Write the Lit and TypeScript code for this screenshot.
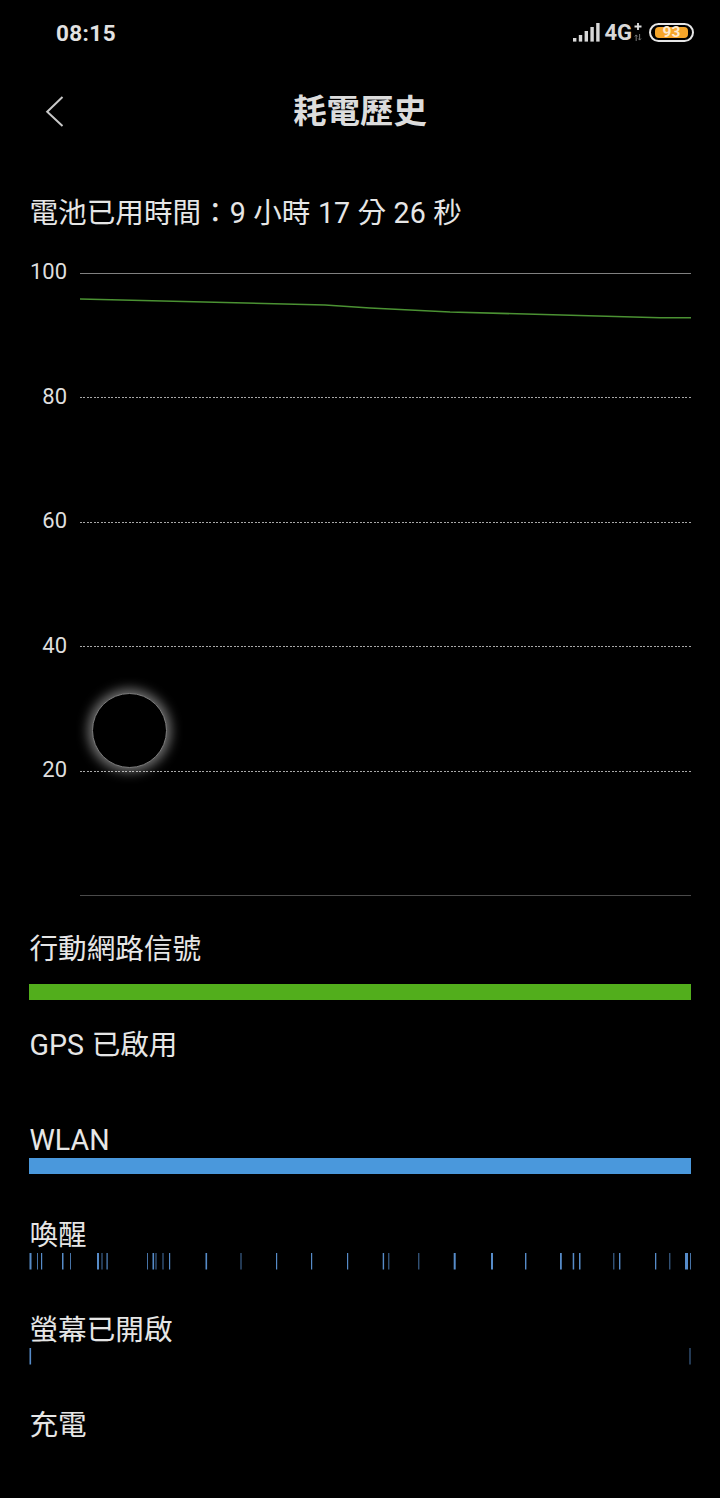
import { LitElement, html, css, svg } from 'lit';
import { customElement } from 'lit/decorators.js';

const TICKS_WAKE: [number, number][] = [
  [0.5, 2], [8, 1], [12, 1.2], [33, 1.5], [41, 1], [68, 2], [72.5, 1], [77.5, 1.2],
  [118, 1], [123.5, 1.6], [126.5, 1], [133.5, 1], [140, 1.2], [176.5, 1.6], [211.5, 1],
  [247, 1.2], [282, 1.2], [318, 1.2], [353.7, 1.4], [359.3, 1], [389.3, 1], [424.7, 2],
  [462, 2], [496, 1.4], [531, 1.8], [543.7, 1.5], [550, 1.5], [584.3, 1], [590, 1.4],
  [626, 1.3], [640.3, 1], [656, 3], [661, 1],
];
const TICKS_SCREEN: [number, number][] = [[0.5, 1.6], [660.5, 1]];

const LEVELS = ['100', '80', '60', '40', '20', ''];

@customElement('app-root')
export class AppRoot extends LitElement {
  static styles = css`
    :host {
      display: block;
      width: 720px;
      height: 1498px;
      background: #000;
      color: #e6e6e6;
      font-family: Roboto, 'Noto Sans CJK TC', sans-serif;
      overflow: hidden;
    }

    .status {
      height: 64px;
      display: flex;
      align-items: center;
      justify-content: space-between;
      padding: 2px 26px 0 56px;
      box-sizing: border-box;
    }

    .time {
      font-size: 22.5px;
      font-weight: 700;
      color: #e2e2e2;
      letter-spacing: 0.4px;
    }

    .indicators {
      display: flex;
      align-items: center;
      margin-top: -2px;
    }

    .net {
      font-size: 22px;
      font-weight: 700;
      color: #d8d8d8;
      margin-left: 4px;
    }

    .net-extra {
      margin: 0 7px 0 2px;
      display: block;
    }

    .battery {
      width: 45px;
      height: 19px;
      box-sizing: border-box;
      border: 2px solid #e6e6e6;
      border-radius: 9.5px;
      padding: 2px 4px;
      display: flex;
    }

    .battery span {
      flex: 1;
      background: #f5a52a;
      border-radius: 4px;
      font-size: 15.5px;
      font-weight: 700;
      line-height: 11px;
      text-align: center;
      color: #fbeacf;
    }

    .nav {
      height: 96px;
      position: relative;
      display: flex;
      align-items: center;
      justify-content: center;
    }

    .back {
      position: absolute;
      left: 44px;
      top: 30px;
    }

    .title {
      font-size: 33.4px;
      font-weight: 700;
      color: #dcdcdc;
      line-height: 40px;
      margin-top: -1px;
    }

    .summary {
      height: 40px;
      line-height: 42px;
      margin: 32px 0 29px 29.5px;
      font-size: 28.6px;
      word-spacing: 0.4px;
      white-space: nowrap;
    }

    .chart {
      position: relative;
      height: 646.5px;
      display: flex;
      flex-direction: column;
      justify-content: space-between;
      margin-bottom: 22.5px;
    }

    .level {
      height: 24px;
      display: flex;
      align-items: center;
    }

    .level b {
      width: 67px;
      text-align: right;
      font-weight: 400;
      font-size: 22px;
      line-height: 22px;
      color: #dedede;
      margin-top: -2px;
    }

    .rule {
      flex: none;
      width: 611px;
      height: 1px;
      margin-left: 13px;
      background: repeating-linear-gradient(90deg, #a8a8a8 0 2px, transparent 2px 3.5px);
    }

    .rule.top {
      background: #808080;
    }

    .rule.bottom {
      background: #4a4a4a;
    }

    .curve {
      position: absolute;
      left: 80px;
      top: 0;
    }

    .touch {
      position: absolute;
      left: 92px;
      top: 432px;
      width: 75px;
      height: 75px;
      box-sizing: border-box;
      border-radius: 50%;
      background: #000;
      border: 1.5px solid #7c7c7c;
      box-shadow: 0 0 12px 4px rgba(255, 255, 255, 0.45);
    }

    .row {
      height: 95px;
    }

    .row .label {
      height: 38px;
      line-height: 40px;
      padding-left: 29.5px;
      font-size: 28.6px;
      word-spacing: 0.6px;
      white-space: nowrap;
    }

    .row.first .label {
      line-height: 38px;
    }

    .track {
      display: block;
      margin-left: 29px;
      width: 662px;
      height: 16.5px;
    }

    .bar {
      height: 16px;
      margin-left: 29px;
      width: 662px;
    }

    .bar.cell {
      background: #52ae1c;
      margin-top: 16px;
    }

    .bar.wlan {
      background: #4a98dc;
    }
  `;

  private ticks(items: [number, number][]) {
    return html`<svg class="track" viewBox="0 0 662 16.5">
      ${items.map(
        ([x, w]) => svg`<rect x=${x} y="0" width=${w} height="16.5" fill="#5f9ade" opacity=${w < 1.2 ? 0.75 : 0.9}></rect>`
      )}
    </svg>`;
  }

  render() {
    return html`
      <div class="status">
        <span class="time">08:15</span>
        <div class="indicators">
          <svg width="27" height="19" viewBox="0 0 27 19">
            <rect x="0" y="15" width="3.4" height="3.6" fill="#d8d8d8"></rect>
            <rect x="5.8" y="12" width="3.4" height="6.6" fill="#d8d8d8"></rect>
            <rect x="11.6" y="8" width="3.4" height="10.6" fill="#d8d8d8"></rect>
            <rect x="17.4" y="4" width="3.4" height="14.6" fill="#d8d8d8"></rect>
            <rect x="23.2" y="0" width="3.4" height="18.6" fill="#d8d8d8"></rect>
          </svg>
          <span class="net">4G</span>
          <svg class="net-extra" width="8" height="20" viewBox="0 0 8 20">
            <path d="M4 1v7M.5 4.5h7" stroke="#e0e0e0" stroke-width="1.8" fill="none"></path>
            <path d="M2.2 19v-6M.8 14.5l1.4-1.6 1.4 1.6M5.6 12v6M4.2 16.5l1.4 1.6 1.4-1.6" stroke="#777" stroke-width="1" fill="none"></path>
          </svg>
          <div class="battery"><span>93</span></div>
        </div>
      </div>

      <div class="nav">
        <svg class="back" width="22" height="36" viewBox="0 0 22 36">
          <path d="M18.5 3 3.2 17.7 18.5 32" stroke="#c8c8c8" stroke-width="2" fill="none"></path>
        </svg>
        <span class="title">耗電歷史</span>
      </div>

      <div class="summary">電池已用時間：9 小時 17 分 26 秒</div>

      <div class="chart">
        ${LEVELS.map(
          (level, i) => html`<div class="level">
            <b>${level}</b>
            <div class="rule ${i === 0 ? 'top' : i === LEVELS.length - 1 ? 'bottom' : ''}"></div>
          </div>`
        )}
        <svg class="curve" width="611" height="70" viewBox="0 0 611 70">
          <polyline
            points="0,38 245,44 290,47 370,51 580,56.7 611,56.7"
            fill="none"
            stroke="#4b9233"
            stroke-width="1.6"
          ></polyline>
        </svg>
        <div class="touch"></div>
      </div>

      <div class="row first">
        <div class="label">行動網路信號</div>
        <div class="bar cell"></div>
      </div>
      <div class="row"><div class="label">GPS 已啟用</div></div>
      <div class="row">
        <div class="label">WLAN</div>
        <div class="bar wlan"></div>
      </div>
      <div class="row">
        <div class="label">喚醒</div>
        ${this.ticks(TICKS_WAKE)}
      </div>
      <div class="row">
        <div class="label">螢幕已開啟</div>
        ${this.ticks(TICKS_SCREEN)}
      </div>
      <div class="row"><div class="label">充電</div></div>
    `;
  }
}
